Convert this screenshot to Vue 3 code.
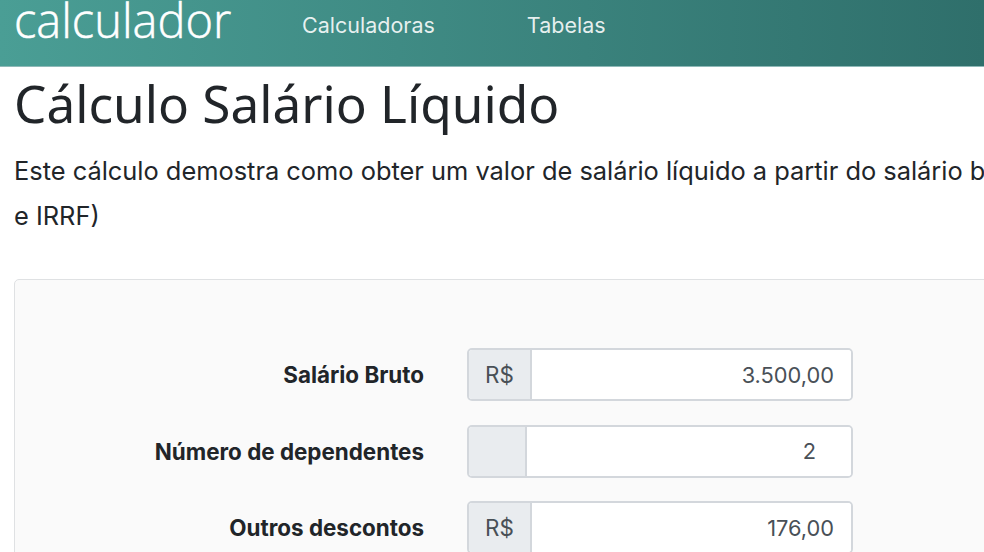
<template>
  <div class="page">
    <header class="navbar">
      <span class="brand">calculador</span>
      <nav class="nav-links">
        <a class="nav-link">Calculadoras</a>
        <a class="nav-link">Tabelas</a>
      </nav>
    </header>

    <main class="content">
      <h1 class="title">Cálculo Salário Líquido</h1>
      <p class="lead">
        Este cálculo demostra como obter um valor de salário líquido a partir do salário bruto (INSS<br />
        e IRRF)
      </p>

      <section class="card">
        <div v-for="field in fields" :key="field.label" class="form-row">
          <label class="field-label">{{ field.label }}</label>
          <div class="input-group">
            <span class="prefix" :class="{ 'prefix-empty': !field.prefix }">{{ field.prefix }}</span>
            <input class="field-input" :class="{ 'input-short': !field.prefix }" :value="field.value" readonly />
          </div>
        </div>
      </section>
    </main>
  </div>
</template>

<script setup>
const fields = [
  { label: 'Salário Bruto', prefix: 'R$', value: '3.500,00' },
  { label: 'Número de dependentes', prefix: '', value: '2' },
  { label: 'Outros descontos', prefix: 'R$', value: '176,00' }
]
</script>

<style>
html, body {
  margin: 0;
  overflow: hidden;
  background: #fff;
}
</style>

<style scoped>
.page {
  width: 984px;
  height: 552px;
  overflow: hidden;
  font-family: Inter, "Liberation Sans", sans-serif;
  color: #212529;
}

.navbar {
  height: 66px;
  display: flex;
  align-items: flex-start;
  padding-left: 14px;
  background: linear-gradient(90deg, #4a9e95 0%, #2f6f6b 100%);
  border-bottom: 1px solid #8fb9b8;
  overflow: hidden;
}

.brand {
  font-family: "Open Sans", sans-serif;
  font-weight: 300;
  font-size: 47px;
  line-height: 40px;
  -webkit-text-stroke: 0.5px #fff;
  color: #fff;
  width: 288px;
  flex: none;
}

.nav-links {
  display: flex;
  gap: 92px;
  margin-top: 11px;
}

.nav-link {
  font-size: 21.5px;
  line-height: 28px;
  color: rgba(255, 255, 255, 0.88);
}

.content {
  padding-left: 14px;
}

.title {
  margin: 6px 0 0;
  font-family: "Noto Sans", sans-serif;
  font-weight: 400;
  font-size: 51.3px;
  line-height: 60px;
  white-space: nowrap;
  color: #212529;
}

.lead {
  margin: 15px 0 0;
  font-size: 25.4px;
  line-height: 45px;
  white-space: nowrap;
}

.card {
  margin-top: 41px;
  width: 1100px;
  height: 320px;
  box-sizing: border-box;
  padding-top: 68px;
  background: #fafafa;
  border: 1px solid #dfe1e3;
  border-radius: 5px;
  display: flex;
  flex-direction: column;
  gap: 23.5px;
}

.form-row {
  display: flex;
  align-items: center;
}

.field-label {
  width: 409px;
  text-align: right;
  font-weight: 700;
  font-size: 22.4px;
  color: #212529;
  white-space: nowrap;
}

.input-group {
  display: flex;
  width: 386px;
  height: 53px;
  margin-left: 43px;
  box-sizing: border-box;
  border: 2px solid #d3d7dc;
  border-radius: 5px;
  overflow: hidden;
  background: #fff;
}

.prefix {
  width: 63px;
  flex: none;
  box-sizing: border-box;
  display: flex;
  align-items: center;
  justify-content: center;
  background: #e9ecef;
  border-right: 2px solid #d3d7dc;
  font-size: 22.4px;
  color: #495057;
}

.prefix-empty {
  width: 58px;
}

.field-input {
  flex: 1;
  min-width: 0;
  border: 0;
  outline: 0;
  background: #fff;
  padding: 0 17px 0 0;
  text-align: right;
  font-family: inherit;
  font-size: 21.8px;
  color: #495057;
}

.input-short {
  padding-right: 35px;
}
</style>
